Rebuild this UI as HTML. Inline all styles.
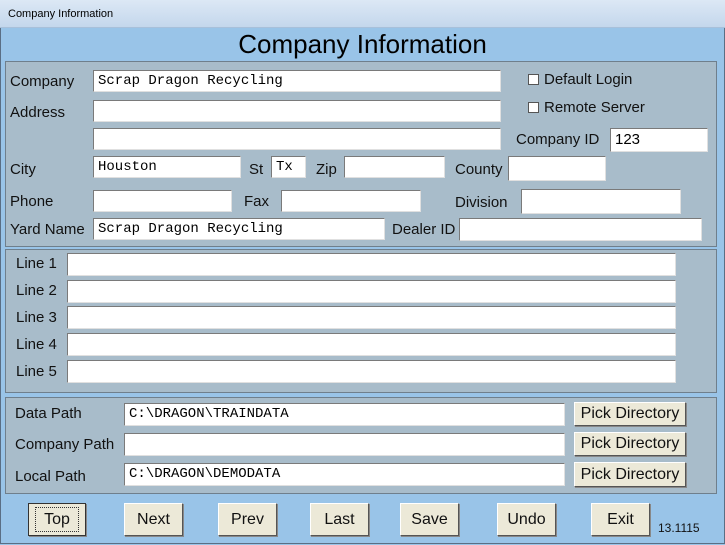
<!DOCTYPE html>
<html><head><style>
body{margin:0;width:725px;height:545px;overflow:hidden;font-family:"Liberation Sans",Arial,sans-serif;background:#99c4e8;position:relative}
.a{position:absolute}
.tb{left:0;top:0;width:725px;height:28px;background:linear-gradient(#dce8f5,#c4d7ec);font-size:11px;line-height:28px;box-sizing:border-box;padding-left:8px;border-bottom:1px solid #a8c0da}
.frame{left:0;top:28px;width:723px;height:515px;border:1px solid #5a6e84;border-top:none}
.panel{background:#a8bcca;border:1px solid #6f7f8c;box-sizing:border-box}
.in{background:#fff;border:1px solid #7a7a7a;border-right-color:#e0e0e0;border-bottom-color:#e0e0e0;box-sizing:border-box;font-family:"Liberation Mono",monospace;font-size:14px;line-height:20px;padding-left:4px;white-space:pre}
.l{font-size:15px;color:#111;white-space:nowrap}
.btn{background:#ece9d8;border:1px solid #fff;border-right-color:#555;border-bottom-color:#555;box-sizing:border-box;font-size:16px;text-align:center;color:#111;box-shadow:1px 1px 0 #888}
.cb{width:11px;height:11px;background:#fff;border:1px solid #555;box-sizing:border-box}
</style></head><body>
<div class="a tb">Company Information</div>
<div class="a frame"></div>
<div class="a" style="left:0;top:29px;width:725px;text-align:center;font-size:26px;color:#000;line-height:30px">Company Information</div>

<div class="a panel" style="left:5px;top:61px;width:712px;height:186px"></div>
<div class="a panel" style="left:5px;top:249px;width:712px;height:144px"></div>
<div class="a panel" style="left:5px;top:397px;width:712px;height:97px"></div>

<div class="a l" style="left:10px;top:73px">Company</div>
<div class="a in" style="left:93px;top:70px;width:408px;height:22px">Scrap Dragon Recycling</div>
<div class="a l" style="left:10px;top:104px">Address</div>
<div class="a in" style="left:93px;top:100px;width:408px;height:22px"></div>
<div class="a in" style="left:93px;top:128px;width:408px;height:22px"></div>
<div class="a cb" style="left:528px;top:74px"></div><div class="a l" style="left:544px;top:71px">Default Login</div>
<div class="a cb" style="left:528px;top:102px"></div><div class="a l" style="left:544px;top:99px">Remote Server</div>
<div class="a l" style="left:516px;top:131px">Company ID</div>
<div class="a in" style="left:610px;top:128px;width:98px;height:24px;font-family:'Liberation Sans',sans-serif;font-size:15px;line-height:22px">123</div>

<div class="a l" style="left:10px;top:161px">City</div>
<div class="a in" style="left:93px;top:156px;width:148px;height:22px">Houston</div>
<div class="a l" style="left:249px;top:161px">St</div>
<div class="a in" style="left:271px;top:156px;width:35px;height:22px">Tx</div>
<div class="a l" style="left:316px;top:161px">Zip</div>
<div class="a in" style="left:344px;top:156px;width:101px;height:22px"></div>
<div class="a l" style="left:455px;top:161px">County</div>
<div class="a in" style="left:508px;top:156px;width:98px;height:25px"></div>

<div class="a l" style="left:10px;top:193px">Phone</div>
<div class="a in" style="left:93px;top:190px;width:139px;height:22px"></div>
<div class="a l" style="left:244px;top:193px">Fax</div>
<div class="a in" style="left:281px;top:190px;width:140px;height:22px"></div>
<div class="a l" style="left:455px;top:194px">Division</div>
<div class="a in" style="left:521px;top:189px;width:160px;height:25px"></div>

<div class="a l" style="left:10px;top:221px">Yard Name</div>
<div class="a in" style="left:93px;top:218px;width:292px;height:22px">Scrap Dragon Recycling</div>
<div class="a l" style="left:392px;top:221px">Dealer ID</div>
<div class="a in" style="left:459px;top:218px;width:243px;height:23px"></div>

<div class="a l" style="left:16px;top:255px">Line 1</div><div class="a in" style="left:67px;top:253px;width:609px;height:23px"></div>
<div class="a l" style="left:16px;top:282px">Line 2</div><div class="a in" style="left:67px;top:280px;width:609px;height:23px"></div>
<div class="a l" style="left:16px;top:309px">Line 3</div><div class="a in" style="left:67px;top:306px;width:609px;height:23px"></div>
<div class="a l" style="left:16px;top:336px">Line 4</div><div class="a in" style="left:67px;top:333px;width:609px;height:23px"></div>
<div class="a l" style="left:16px;top:363px">Line 5</div><div class="a in" style="left:67px;top:360px;width:609px;height:23px"></div>

<div class="a l" style="left:15px;top:405px">Data Path</div>
<div class="a in" style="left:124px;top:403px;width:441px;height:23px">C:\DRAGON\TRAINDATA</div>
<div class="a btn" style="left:574px;top:402px;width:112px;height:24px;line-height:22px">Pick Directory</div>
<div class="a l" style="left:15px;top:436px">Company Path</div>
<div class="a in" style="left:124px;top:433px;width:441px;height:23px"></div>
<div class="a btn" style="left:574px;top:432px;width:112px;height:24px;line-height:22px">Pick Directory</div>
<div class="a l" style="left:15px;top:468px">Local Path</div>
<div class="a in" style="left:124px;top:463px;width:441px;height:23px">C:\DRAGON\DEMODATA</div>
<div class="a btn" style="left:574px;top:462px;width:112px;height:25px;line-height:23px">Pick Directory</div>

<div class="a btn" style="left:28px;top:503px;width:58px;height:33px;line-height:31px;border:1px solid #333"><span style="outline:1px dotted #333;padding:3px 8px">Top</span></div>
<div class="a btn" style="left:124px;top:503px;width:59px;height:33px;line-height:31px">Next</div>
<div class="a btn" style="left:218px;top:503px;width:59px;height:33px;line-height:31px">Prev</div>
<div class="a btn" style="left:310px;top:503px;width:59px;height:33px;line-height:31px">Last</div>
<div class="a btn" style="left:400px;top:503px;width:59px;height:33px;line-height:31px">Save</div>
<div class="a btn" style="left:497px;top:503px;width:59px;height:33px;line-height:31px">Undo</div>
<div class="a btn" style="left:591px;top:503px;width:59px;height:33px;line-height:31px">Exit</div>
<div class="a" style="left:658px;top:521px;font-size:12px;color:#111">13.1115</div>
</body></html>
